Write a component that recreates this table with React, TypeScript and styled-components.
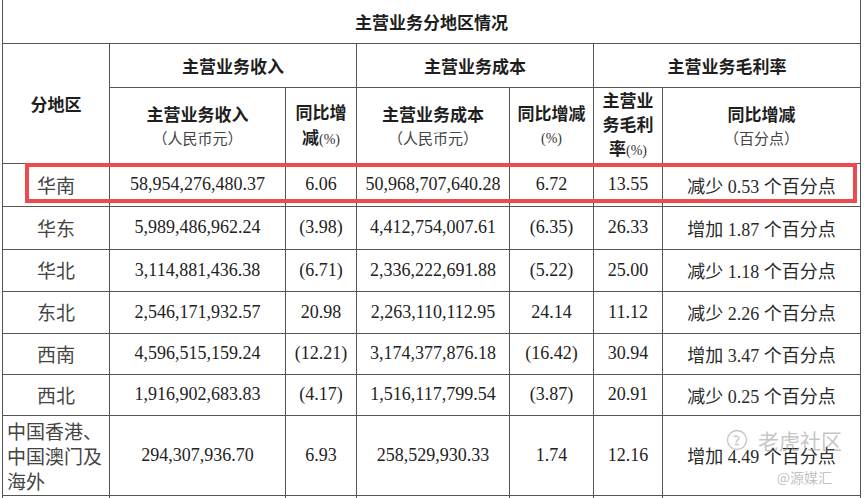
import React from "react";
import styled, { createGlobalStyle } from "styled-components";

const Global = createGlobalStyle`
  html, body { margin: 0; padding: 0; background: #fff; }
  body { width: 864px; height: 498px; overflow: hidden; }
`;

const Page = styled.div`
  position: relative;
  width: 864px;
  height: 498px;
  overflow: hidden;
  padding-left: 2px;
  box-sizing: border-box;
  background: #fff;
`;

const Table = styled.table`
  border-collapse: collapse;
  table-layout: fixed;
  width: 858px;
  font-family: "Liberation Serif", "Noto Sans CJK SC", serif;
  color: #222;
`;

const Tr = styled.tr<{ $h?: number }>`
  height: ${(p) => (p.$h ? `${p.$h}px` : "auto")};
`;

const Cell = styled.td<{ $left?: boolean; $noTop?: boolean }>`
  border: 1px solid #555;
  ${(p) => (p.$noTop ? "border-top: none;" : "")}
  padding: 0;
  text-align: ${(p) => (p.$left ? "left" : "center")};
  vertical-align: middle;
  white-space: nowrap;
  overflow: hidden;
`;

const HeadText = styled.div<{ $lh?: number }>`
  font-family: "Noto Sans CJK SC", sans-serif;
  font-weight: 700;
  font-size: 17px;
  line-height: ${(p) => p.$lh ?? 25}px;
  color: #1e1e1e;
`;

const Unit = styled.div`
  font-family: "Noto Sans CJK SC", serif;
  font-weight: 400;
  font-size: 15px;
  line-height: 24px;
  color: #444;
`;

const Pct = styled.span`
  font-family: "Liberation Serif", serif;
  font-weight: 400;
  font-size: 14px;
  color: #333;
`;

const Num = styled.span`
  font-family: "Liberation Serif", "Noto Sans CJK SC", serif;
  font-size: 18px;
  color: #222;
`;

const Region = styled.div<{ $multi?: boolean }>`
  font-family: "Noto Sans CJK SC", sans-serif;
  font-size: 19px;
  font-weight: 400;
  line-height: ${(p) => (p.$multi ? "25px" : "24px")};
  color: #444;
  padding-left: ${(p) => (p.$multi ? "4px" : "0")};
  white-space: nowrap;
`;

const Mixed = styled.span`
  font-family: "Liberation Serif", "Noto Sans CJK SC", serif;
  font-size: 18px;
  color: #2a2a2a;
`;

const Highlight = styled.div`
  position: absolute;
  left: 25px;
  top: 163px;
  width: 832px;
  height: 40px;
  box-sizing: border-box;
  border: 4px solid #ef4a50;
  pointer-events: none;
`;

const Watermark = styled.div`
  position: absolute;
  left: 726px;
  top: 426px;
  display: flex;
  flex-direction: column;
  align-items: flex-end;
  pointer-events: none;
`;

const WmTop = styled.div`
  display: flex;
  align-items: center;
  gap: 10px;
  font-family: "Noto Sans CJK SC", sans-serif;
  font-size: 21px;
  line-height: 28px;
  color: rgba(140, 140, 140, 0.5);
`;

const WmBottom = styled.div`
  margin-top: 14px;
  margin-right: 10px;
  font-family: "Noto Sans CJK SC", sans-serif;
  font-size: 14px;
  line-height: 18px;
  color: rgba(140, 140, 140, 0.55);
`;

type Row = {
  region: string;
  rev: string;
  revYoy: string;
  cost: string;
  costYoy: string;
  margin: string;
  change: string;
  h: number;
};

const rows: Row[] = [
  { region: "华南", rev: "58,954,276,480.37", revYoy: "6.06", cost: "50,968,707,640.28", costYoy: "6.72", margin: "13.55", change: "减少 0.53 个百分点", h: 43 },
  { region: "华东", rev: "5,989,486,962.24", revYoy: "(3.98)", cost: "4,412,754,007.61", costYoy: "(6.35)", margin: "26.33", change: "增加 1.87 个百分点", h: 43 },
  { region: "华北", rev: "3,114,881,436.38", revYoy: "(6.71)", cost: "2,336,222,691.88", costYoy: "(5.22)", margin: "25.00", change: "减少 1.18 个百分点", h: 42 },
  { region: "东北", rev: "2,546,171,932.57", revYoy: "20.98", cost: "2,263,110,112.95", costYoy: "24.14", margin: "11.12", change: "减少 2.26 个百分点", h: 42 },
  { region: "西南", rev: "4,596,515,159.24", revYoy: "(12.21)", cost: "3,174,377,876.18", costYoy: "(16.42)", margin: "30.94", change: "增加 3.47 个百分点", h: 41 },
  { region: "西北", rev: "1,916,902,683.83", revYoy: "(4.17)", cost: "1,516,117,799.54", costYoy: "(3.87)", margin: "20.91", change: "减少 0.25 个百分点", h: 41 },
];

const last: Row = {
  region: "中国香港、中国澳门及海外",
  rev: "294,307,936.70",
  revYoy: "6.93",
  cost: "258,529,930.33",
  costYoy: "1.74",
  margin: "12.16",
  change: "增加 4.49 个百分点",
  h: 80,
};

const LogoIcon = () => (
  <svg width="22" height="22" viewBox="0 0 22 22" fill="none">
    <circle cx="11" cy="11" r="9.5" stroke="rgba(140,140,140,0.5)" strokeWidth="1.3" />
    <path d="M8 7.5c2-1 5-0.5 5 1.5s-3 2.5-3 4.5M9.5 15.5h3" stroke="rgba(140,140,140,0.5)" strokeWidth="1.3" strokeLinecap="round" />
  </svg>
);

const DataRow = ({ r, multi }: { r: Row; multi?: boolean }) => (
  <Tr $h={r.h}>
    <Cell $left={multi}>
      {multi ? (
        <Region $multi>
          中国香港、
          <br />
          中国澳门及
          <br />
          海外
        </Region>
      ) : (
        <Region>{r.region}</Region>
      )}
    </Cell>
    <Cell><Num>{r.rev}</Num></Cell>
    <Cell><Num>{r.revYoy}</Num></Cell>
    <Cell><Num>{r.cost}</Num></Cell>
    <Cell><Num>{r.costYoy}</Num></Cell>
    <Cell><Num>{r.margin}</Num></Cell>
    <Cell><Mixed>{r.change}</Mixed></Cell>
  </Tr>
);

export default function App() {
  return (
    <Page>
      <Global />
      <Table>
        <colgroup>
          <col style={{ width: 107 }} />
          <col style={{ width: 176 }} />
          <col style={{ width: 71 }} />
          <col style={{ width: 153 }} />
          <col style={{ width: 84 }} />
          <col style={{ width: 69 }} />
          <col style={{ width: 198 }} />
        </colgroup>
        <tbody>
          <Tr $h={43}>
            <Cell colSpan={7} $noTop>
              <HeadText>主营业务分地区情况</HeadText>
            </Cell>
          </Tr>
          <Tr $h={44}>
            <Cell rowSpan={2}>
              <HeadText>分地区</HeadText>
            </Cell>
            <Cell colSpan={2}>
              <HeadText>主营业务收入</HeadText>
            </Cell>
            <Cell colSpan={2}>
              <HeadText>主营业务成本</HeadText>
            </Cell>
            <Cell colSpan={2}>
              <HeadText>主营业务毛利率</HeadText>
            </Cell>
          </Tr>
          <Tr $h={75}>
            <Cell>
              <HeadText>主营业务收入</HeadText>
              <Unit>（人民币元）</Unit>
            </Cell>
            <Cell>
              <HeadText>同比增</HeadText>
              <HeadText>
                减<Pct>(%)</Pct>
              </HeadText>
            </Cell>
            <Cell>
              <HeadText>主营业务成本</HeadText>
              <Unit>（人民币元）</Unit>
            </Cell>
            <Cell>
              <HeadText>同比增减</HeadText>
              <Unit><Pct>(%)</Pct></Unit>
            </Cell>
            <Cell>
              <HeadText $lh={24}>主营业</HeadText>
              <HeadText $lh={24}>务毛利</HeadText>
              <HeadText $lh={24}>
                率<Pct>(%)</Pct>
              </HeadText>
            </Cell>
            <Cell>
              <HeadText>同比增减</HeadText>
              <Unit>（百分点）</Unit>
            </Cell>
          </Tr>
          {rows.map((r) => (
            <DataRow key={r.region} r={r} />
          ))}
          <DataRow r={last} multi />
          <Tr $h={30}>
            <Cell />
            <Cell />
            <Cell />
            <Cell />
            <Cell />
            <Cell />
            <Cell />
          </Tr>
        </tbody>
      </Table>
      <Highlight />
      <Watermark>
        <WmTop>
          <LogoIcon />
          <span>老虎社区</span>
        </WmTop>
        <WmBottom>@源媒汇</WmBottom>
      </Watermark>
    </Page>
  );
}
